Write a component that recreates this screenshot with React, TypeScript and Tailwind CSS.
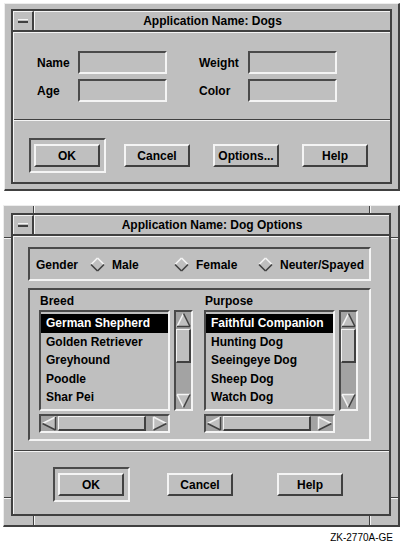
import type { ReactNode } from 'react';

const RAISED = 'border-2 border-t-[#f4f4f4] border-l-[#f4f4f4] border-b-[#404040] border-r-[#404040]';
const SUNKEN = 'border-2 border-t-[#4a4a4a] border-l-[#4a4a4a] border-b-[#f4f4f4] border-r-[#f4f4f4]';
const LIGHT = '#f4f4f4';
const DARK = '#404040';
const FACE = '#bfbfbf';

function TitleBar({ title }: { title: string }) {
  return (
    <div className="flex h-[21px] shrink-0 border-b-2 border-b-[#404040]">
      <div className="flex w-[21px] items-center justify-center border-t border-l border-r-2 border-t-[#f4f4f4] border-l-[#f4f4f4] border-r-[#404040]">
        <div className="h-[4px] w-[10px] border-t border-b-2 border-t-[#f4f4f4] border-b-[#404040]" />
      </div>
      <div className="flex flex-1 items-center justify-center border-t border-l border-t-[#f4f4f4] border-l-[#f4f4f4] pb-[1px]">
        {title}
      </div>
    </div>
  );
}

// resize-handle notches drawn on the window border
function Handles() {
  const v = 'absolute w-[2px] border-l border-r border-l-[#404040] border-r-[#f4f4f4]';
  const h = 'absolute h-[2px] border-t border-b border-t-[#404040] border-b-[#f4f4f4]';
  return (
    <>
      <div className={`${v} left-[29px] top-0 h-[7px]`} />
      <div className={`${v} left-[365px] top-0 h-[7px]`} />
      <div className={`${v} left-[29px] bottom-0 h-[9px]`} />
      <div className={`${v} left-[365px] bottom-0 h-[9px]`} />
      <div className={`${h} left-0 top-[31px] w-[7px]`} />
      <div className={`${h} left-0 top-[291px] w-[7px]`} />
      <div className={`${h} right-0 top-[31px] w-[7px]`} />
      <div className={`${h} right-0 top-[291px] w-[7px]`} />
    </>
  );
}

function Window({
  title,
  className,
  handles,
  children,
}: {
  title: string;
  className: string;
  handles?: boolean;
  children: ReactNode;
}) {
  return (
    <div
      className={`relative flex flex-col border-t border-l border-b-2 border-r-2 border-t-[#ededed] border-l-[#ededed] border-b-[#404040] border-r-[#404040] bg-[#bfbfbf] ${className}`}
    >
      {handles && <Handles />}
      <div className="flex flex-1 flex-col border-2 border-[#404040]">
        <TitleBar title={title} />
        <div className="flex flex-1 flex-col border-t border-l border-t-[#f4f4f4] border-l-[#f4f4f4]">{children}</div>
      </div>
    </div>
  );
}

function Button({ label }: { label: string }) {
  return (
    <div className={`flex h-[23px] w-[66px] items-center justify-center ${RAISED}`}>{label}</div>
  );
}

function DefaultButton({ label }: { label: string }) {
  return (
    <div className={`pl-[3px] pr-[4px] py-[4px] ${SUNKEN}`}>
      <Button label={label} />
    </div>
  );
}

function Separator() {
  return <div className="border-t border-b border-t-[#404040] border-b-[#f4f4f4]" />;
}

function FieldGroup({ labels, labelWidth }: { labels: string[]; labelWidth: string }) {
  return (
    <div className="flex flex-col gap-[5px]">
      {labels.map((l) => (
        <div key={l} className="flex items-center">
          <span className={labelWidth}>{l}</span>
          <div className={`h-[23px] w-[89px] ${SUNKEN}`} />
        </div>
      ))}
    </div>
  );
}

function Arrow({ dir }: { dir: 'up' | 'down' | 'left' | 'right' }) {
  const w = dir === 'up' || dir === 'down' ? 15 : 16;
  const h = dir === 'up' || dir === 'down' ? 16 : 15;
  let pts: [number, number][] = [];
  let edges: { a: number; b: number; c: string }[] = [];
  if (dir === 'up') {
    pts = [[7.5, 1.5], [14, 14.5], [1, 14.5]];
    edges = [{ a: 0, b: 2, c: LIGHT }, { a: 0, b: 1, c: DARK }, { a: 1, b: 2, c: DARK }];
  } else if (dir === 'down') {
    pts = [[1, 1.5], [14, 1.5], [7.5, 14.5]];
    edges = [{ a: 0, b: 1, c: LIGHT }, { a: 0, b: 2, c: LIGHT }, { a: 1, b: 2, c: DARK }];
  } else if (dir === 'left') {
    pts = [[1.5, 7.5], [14.5, 1], [14.5, 14]];
    edges = [{ a: 0, b: 1, c: LIGHT }, { a: 0, b: 2, c: DARK }, { a: 1, b: 2, c: DARK }];
  } else {
    pts = [[1.5, 1], [14.5, 7.5], [1.5, 14]];
    edges = [{ a: 0, b: 2, c: LIGHT }, { a: 0, b: 1, c: LIGHT }, { a: 1, b: 2, c: DARK }];
  }
  return (
    <svg width={w} height={h} viewBox={`0 0 ${w} ${h}`} className="shrink-0">
      <polygon points={pts.map((p) => p.join(',')).join(' ')} fill={FACE} />
      {edges.map((e, i) => (
        <line
          key={i}
          x1={pts[e.a][0]}
          y1={pts[e.a][1]}
          x2={pts[e.b][0]}
          y2={pts[e.b][1]}
          stroke={e.c}
          strokeWidth="1.5"
        />
      ))}
    </svg>
  );
}

function VScroll() {
  return (
    <div className={`flex h-[101px] w-[19px] flex-col bg-[#a3a3a3] ${SUNKEN}`}>
      <Arrow dir="up" />
      <div className="mt-[1px] h-[34px] border-t border-l border-b-2 border-r-2 border-t-[#f4f4f4] border-l-[#f4f4f4] border-b-[#404040] border-r-[#404040] bg-[#bfbfbf]" />
      <div className="flex-1" />
      <Arrow dir="down" />
    </div>
  );
}

function HScroll() {
  return (
    <div className={`mt-[3px] flex h-[19px] w-[131px] bg-[#a3a3a3] ${SUNKEN}`}>
      <Arrow dir="left" />
      <div className="ml-[1px] w-[88px] border-t border-l border-b-2 border-r-2 border-t-[#f4f4f4] border-l-[#f4f4f4] border-b-[#404040] border-r-[#404040] bg-[#bfbfbf]" />
      <div className="flex-1" />
      <Arrow dir="right" />
    </div>
  );
}

function ScrollList({ label, items }: { label: string; items: string[] }) {
  return (
    <div className="flex flex-col">
      <div className="h-[14px] pl-[1px] leading-[14px]">{label}</div>
      <div className="mt-[2px] flex gap-[4px]">
        <div className={`h-[101px] w-[131px] pt-[2px] ${SUNKEN}`}>
          {items.map((it, i) => (
            <div
              key={it}
              className={`h-[18.5px] pl-[5px] leading-[18.5px] whitespace-nowrap ${i === 0 ? 'bg-black text-white' : ''}`}
            >
              {it}
            </div>
          ))}
        </div>
        <VScroll />
      </div>
      <HScroll />
    </div>
  );
}

function Radio({ label }: { label: string }) {
  return (
    <div className="flex w-[84px] items-center gap-[7px]">
      <svg width="15" height="15" viewBox="0 0 15 15" className="shrink-0">
        <polygon points="7.5,1 14,7.5 7.5,14 1,7.5" fill={FACE} />
        <line x1="1" y1="7.5" x2="7.5" y2="1" stroke={LIGHT} strokeWidth="1.6" />
        <line x1="7.5" y1="1" x2="14" y2="7.5" stroke={LIGHT} strokeWidth="1.6" />
        <line x1="14" y1="7.5" x2="7.5" y2="14" stroke={DARK} strokeWidth="1.6" />
        <line x1="7.5" y1="14" x2="1" y2="7.5" stroke={DARK} strokeWidth="1.6" />
      </svg>
      <span className="whitespace-nowrap">{label}</span>
    </div>
  );
}

export default function App() {
  return (
    <div className="h-[549px] w-[403px] overflow-hidden bg-white font-['Liberation_Sans',Arial,sans-serif] text-[12px] font-bold leading-[14px] text-black">
      <Window title="Application Name: Dogs" className="ml-[4px] mt-[3px] h-[188px] w-[396px] pt-[5px] pl-[6px] pr-[6px] pb-[5px]">
        <div className="flex gap-[32px] pl-[23px] pt-[18px]">
          <FieldGroup labels={['Name', 'Age']} labelWidth="w-[41px]" />
          <FieldGroup labels={['Weight', 'Color']} labelWidth="w-[49px]" />
        </div>
        <div className="mt-[17px]">
          <Separator />
        </div>
        <div className="mt-[17px] flex items-center pl-[15px]">
          <DefaultButton label="OK" />
          <div className="ml-[18px]">
            <Button label="Cancel" />
          </div>
          <div className="ml-[23px]">
            <Button label="Options..." />
          </div>
          <div className="ml-[23px]">
            <Button label="Help" />
          </div>
        </div>
      </Window>

      <Window
        title="Application Name: Dog Options"
        handles
        className="ml-[3px] mt-[14px] h-[322px] w-[397px] pt-[7px] pl-[7px] pr-[7px] pb-[9px]"
      >
        <div className={`ml-[14px] mt-[10px] flex h-[34px] w-[343px] items-center pl-[6px] pt-[1px] ${SUNKEN}`}>
          <span>Gender</span>
          <div className="ml-[12px] flex">
            <Radio label="Male" />
            <Radio label="Female" />
            <Radio label="Neuter/Spayed" />
          </div>
        </div>
        <div className={`ml-[14px] mt-[7px] flex h-[153px] w-[343px] pl-[9px] pt-[4px] ${SUNKEN}`}>
          <div className="w-[165px]">
            <ScrollList label="Breed" items={['German Shepherd', 'Golden Retriever', 'Greyhound', 'Poodle', 'Shar Pei']} />
          </div>
          <ScrollList label="Purpose" items={['Faithful Companion', 'Hunting Dog', 'Seeingeye Dog', 'Sheep Dog', 'Watch Dog']} />
        </div>
        <div className="mt-[9px]">
          <Separator />
        </div>
        <div className="mt-[15px] flex items-center pl-[39px]">
          <DefaultButton label="OK" />
          <div className="ml-[37px]">
            <Button label="Cancel" />
          </div>
          <div className="ml-[44px]">
            <Button label="Help" />
          </div>
        </div>
      </Window>

      <div className="mt-[5px] pr-[10px] text-right text-[10px] font-normal leading-[12px]">ZK-2770A-GE</div>
    </div>
  );
}
